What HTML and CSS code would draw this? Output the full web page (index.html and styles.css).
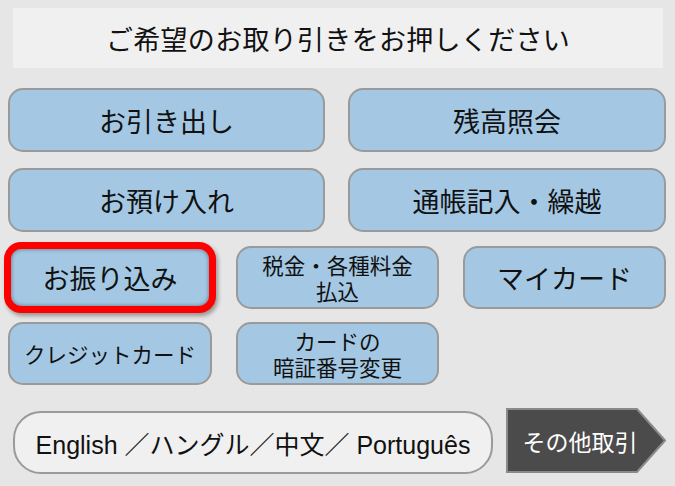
FILE: index.html
```html
<!DOCTYPE html>
<html lang="ja">
<head>
  <meta charset="UTF-8">
  <meta name="viewport" content="width=device-width, initial-scale=1.0">
  <title>お取り引き選択</title>
  <link rel="stylesheet" href="styles.css">
</head>
<body>
  <div class="screen">
    <div class="prompt">ご希望のお取り引きをお押しください</div>

    <div class="main-menu">
      <button class="menu-btn big">お引き出し</button>
      <button class="menu-btn big">残高照会</button>
      <button class="menu-btn big">お預け入れ</button>
      <button class="menu-btn big">通帳記入・繰越</button>
    </div>

    <div class="sub-menu">
      <button class="menu-btn big selected">お振り込み</button>
      <button class="menu-btn small">税金・各種料金<br>払込</button>
      <button class="menu-btn big">マイカード</button>
      <button class="menu-btn small">クレジットカード</button>
      <button class="menu-btn small">カードの<br>暗証番号変更</button>
    </div>

    <div class="footer">
      <button class="lang-btn">English ／ハングル／中文／ Português</button>
      <button class="other-btn">
        <svg class="other-shape" width="160" height="65" viewBox="0 0 160 65">
          <polygon points="1,1 131,1 159,32.5 131,64 1,64" fill="#4b4b4b" stroke="#8a8a8a" stroke-width="2"/>
        </svg>
        <span class="other-label">その他取引</span>
      </button>
    </div>
  </div>
</body>
</html>
```

FILE: styles.css
```css
body {
  margin: 0;
  background: #e6e6e6;
  font-family: "Noto Sans CJK JP", "Noto Sans", sans-serif;
  color: #111;
}
.screen {
  width: 675px;
  height: 486px;
  padding: 8px 0 0 8px;
  box-sizing: border-box;
}
.prompt {
  margin-left: 5px;
  width: 650px;
  height: 60px;
  background: #f0f0f0;
  display: flex;
  align-items: center;
  justify-content: center;
  font-size: 27px;
  letter-spacing: 0.3px;
}
button {
  font-family: inherit;
  color: inherit;
  padding: 0;
  cursor: pointer;
}
.main-menu {
  margin-top: 20px;
  display: grid;
  grid-template-columns: 317px 318px;
  grid-auto-rows: 64px;
  gap: 16px 23px;
}
.sub-menu {
  margin-top: 14px;
  display: grid;
  grid-template-columns: 204px 203px 203px;
  grid-auto-rows: 63px;
  gap: 13px 24px;
}
.menu-btn {
  background: #a4c8e4;
  border: 2px solid #9a9a9a;
  border-radius: 15px;
  display: flex;
  align-items: center;
  justify-content: center;
  text-align: center;
  box-sizing: border-box;
}
.menu-btn.big {
  font-size: 27px;
}
.menu-btn.small {
  font-size: 21.5px;
  line-height: 1.2;
}
/* currently chosen transaction */
.menu-btn.selected {
  margin: -4px;
  border: 7px solid #f00;
  border-radius: 17px;
  box-shadow: 2px 3px 4px rgba(0, 0, 0, 0.35), inset 0 0 4px rgba(0, 0, 0, 0.45);
}
.footer {
  margin-top: 23px;
  display: flex;
  align-items: flex-start;
}
.lang-btn {
  margin: 3px 0 0 5px;
  width: 480px;
  height: 63px;
  background: #f0f0f0;
  border: 2px solid #9a9a9a;
  border-radius: 28px;
  font-family: "Liberation Sans", "Noto Sans CJK JP", sans-serif;
  font-size: 25px;
}
.other-btn {
  position: relative;
  margin-left: 13px;
  width: 160px;
  height: 65px;
  background: none;
  border: none;
  color: #fff;
  font-size: 23px;
}
.other-shape {
  position: absolute;
  left: 0;
  top: 0;
}
.other-label {
  position: relative;
  display: block;
  padding-right: 12px;
}
```
